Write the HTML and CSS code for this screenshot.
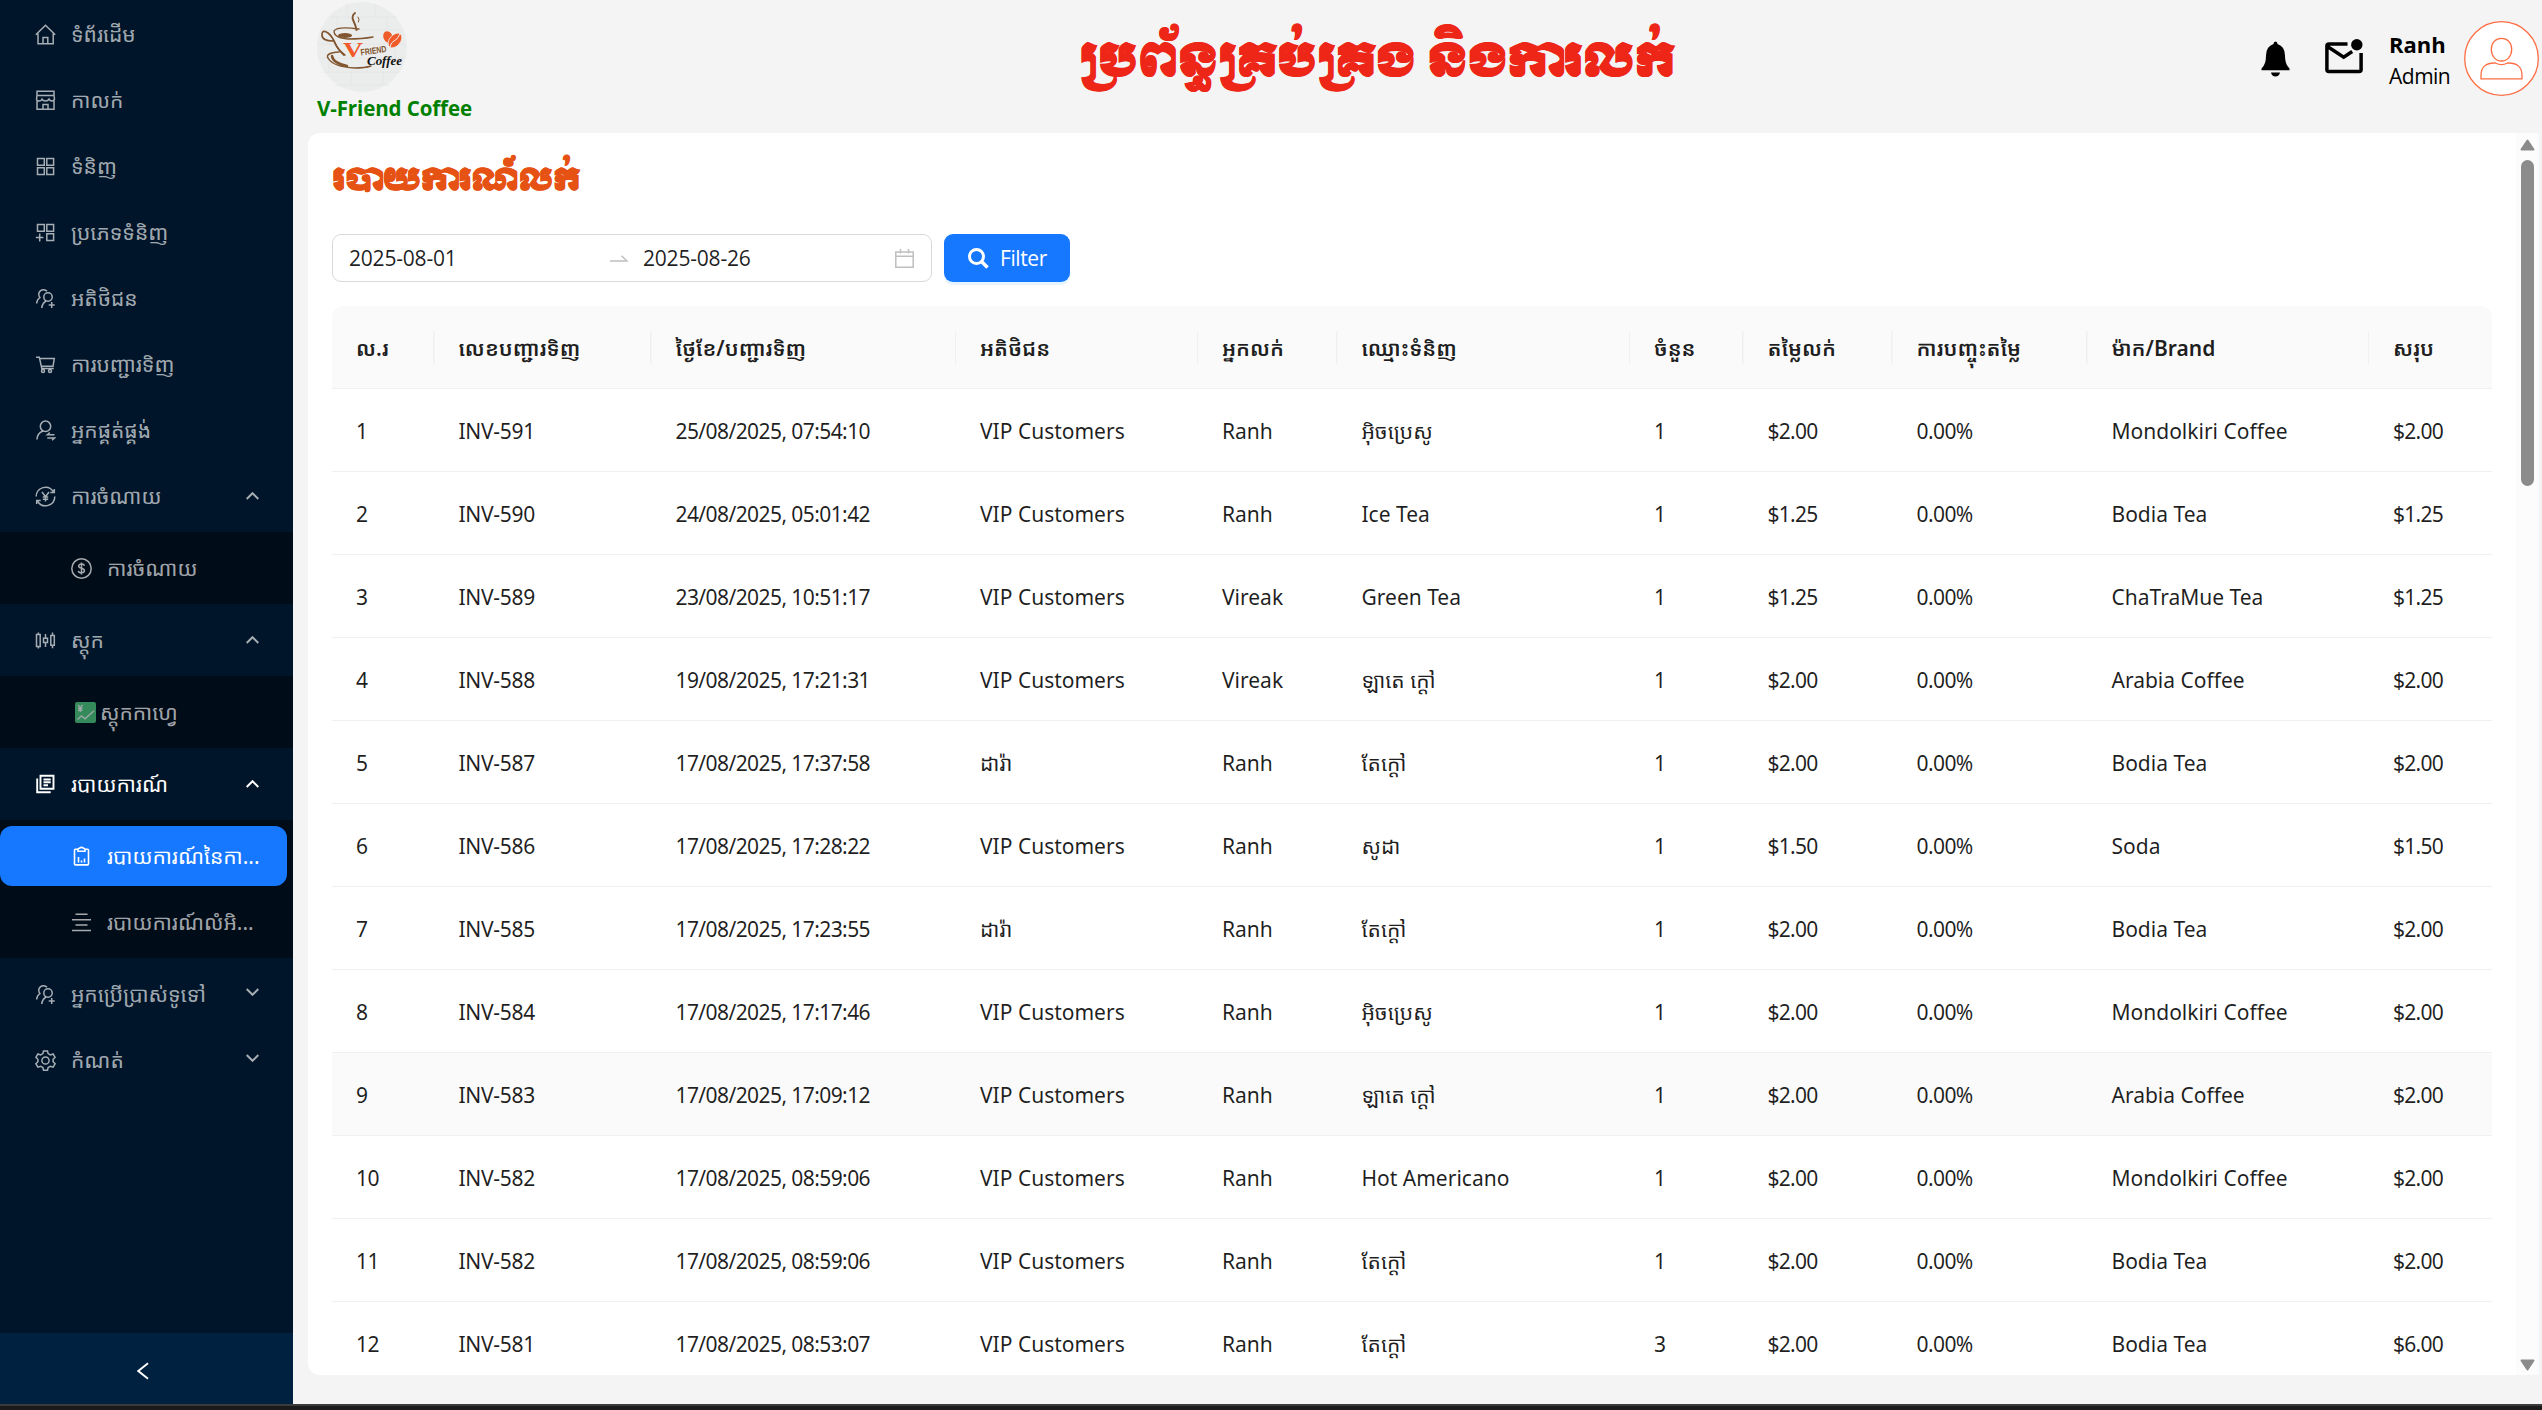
FILE: index.html
```html
<!DOCTYPE html>
<html lang="km">
<head>
<meta charset="utf-8">
<title>V-Friend Coffee</title>
<link rel="stylesheet" href="styles.css">
</head>
<body>
<div class="app">
  <aside class="sidebar">
    <nav class="menu">
      <a class="item"><svg class="icon" viewBox="0 0 21 21"><path d="M.8 10.8 10.5 1.2l9.7 9.6M3 9.5v10.3h15.2V9.5M8 19.8v-6.2h4.8v6.2"/></svg><span>ទំព័រដើម</span></a>
      <a class="item"><svg class="icon" viewBox="0 0 21 21"><path d="M2 1.3h17v4.2H2zM2 5.5 1.5 9q.3 2 2.5 2t3-1.800q.9 1.800 3.500 1.800t3.500-1.800q.9 1.800 3 1.800t2.500-2L19 5.500M2 10.500v8.700h17v-8.700M8 19.200v-4.700h5v4.700"/></svg><span>កាលក់</span></a>
      <a class="item"><svg class="icon" viewBox="0 0 21 21"><path d="M2.500 2.500h6.800v6.800H2.500zM11.800 2.500h6.800v6.800h-6.800zM2.500 11.800h6.800v6.800H2.500zM11.800 11.800h6.800v6.800h-6.800z"/></svg><span>ទំនិញ</span></a>
      <a class="item"><svg class="icon" viewBox="0 0 21 21"><path d="M2.500 2.500h6.800v6.800H2.500zM11.800 2.500h6.800v6.800h-6.800zM11.800 11.800h6.800v6.800h-6.800zM4.700 11.500v8M.9 15.600h7.500"/></svg><span>ប្រភេទទំនិញ</span></a>
      <a class="item"><svg class="icon" viewBox="0 0 21 21"><circle cx="13" cy="9" r="4.200"/><path d="M6.800 20q.3-4.500 4.200-7M12 3.300A4.200 4.200 0 1 0 4.900 9.500Q2 11.500 1.600 15.500M16.700 14v6M13.700 17h6"/></svg><span>អតិថិជន</span></a>
      <a class="item"><svg class="icon" viewBox="0 0 21 21"><path d="M1 3.200h3.300l2.500 11.200h12M5 4.500h14.300L18 12.300H6.300"/><circle cx="8" cy="17" r="1.500"/><circle cx="15" cy="17" r="1.500"/></svg><span>ការបញ្ជារទិញ</span></a>
      <a class="item"><svg class="icon" viewBox="0 0 21 21"><circle cx="10.500" cy="6.300" r="5.200"/><path d="M1.900 19.500q.3-6 6-8.500M19.500 14.800h-7.200l2.500-2.300M12.300 18h7.200L17 20.300"/></svg><span>អ្នកផ្គត់ផ្គង់</span></a>
      <a class="item"><svg class="icon" viewBox="0 0 21 21"><path d="M1.200 10.500A9.300 9.300 0 0 1 18.300 5.500M19.800 10.500A9.300 9.300 0 0 1 2.700 15.500M19.300 3v3.500h-4M1.700 18v-3.500h4M7 6l3.500 4.700L14 6M10.500 10.500v5M7.800 11h5.400M7.800 13.300h5.400"/></svg><span>ការចំណាយ</span><svg class="caret" viewBox="0 0 13 8"><path d="M.7 7 6.500 1.200 12.300 7"/></svg></a>
      <div class="submenu">
        <a class="item"><svg class="icon" viewBox="0 0 21 21"><circle cx="10.500" cy="10.500" r="9.700"/><path d="M13.500 7.700q-.5-1.700-3-1.700t-2.800 2q0 1.700 2.800 2.300t3 2.500q-.2 2-3 2t-3.200-2M10.500 4.500v12"/></svg><span>ការចំណាយ</span></a>
      </div>
      <a class="item"><svg class="icon" viewBox="0 0 21 21"><path d="M1.500 4.500h3.700v12H1.500zM3.400 2.500v2M3.400 16.500v2M10.500 4v4.300M10.500 12.500V17M8.500 8.300h4v4.200h-4zM15.800 5.500h3.500v9.700h-3.500zM17.500 2.500v3M17.500 15.200v3"/></svg><span>ស្តុក</span><svg class="caret" viewBox="0 0 13 8"><path d="M.7 7 6.500 1.200 12.300 7"/></svg></a>
      <div class="submenu">
        <a class="item stock"><svg class="emoji" viewBox="0 0 21 21"><rect width="21" height="21" rx="2" fill="#358a5b"/><path d="M2.500 17.500 6.500 13.800l3.500 3 9-8M3 3l2.300 3L7.500 3M5.300 6v4M3 6.500h4.500M3 8.300h4.500" fill="none" stroke="#9fa9a9" stroke-width="1.300"/></svg><span>ស្តុកកាហ្វេ</span></a>
      </div>
      <a class="item open"><svg class="icon" viewBox="0 0 21 21"><path d="M5.500 1.800h13v13h-13zM2.200 4.500v13.800h13.500M8.500 5.500h7.200M8.500 8.300h7.200M8.500 11.200h4.500" stroke-width="1.900"/></svg><span>របាយការណ៍</span><svg class="caret" viewBox="0 0 13 8"><path d="M.7 7 6.500 1.200 12.300 7"/></svg></a>
      <div class="submenu">
        <a class="item selected"><svg class="icon" viewBox="0 0 21 21"><path d="M7 3.300H4.300q-.8 0-.8.800v14q0 .8.800.8h12.400q.8 0 .8-.8v-14q0-.8-.8-.8H14M7 3.500q0-1.300 1.500-1.300 2-1.700 4 0 1.500 0 1.500 1.300v1.800H7zM7.500 11v5.500M10.500 14.500v2M13.500 12.500v4" stroke-width="1.600"/></svg><span>របាយការណ៍នៃកា...</span></a>
        <a class="item"><svg class="icon" viewBox="0 0 21 21"><path d="M4.500 2.300h12M1 7.700h19M4.500 13.100h12M1 18.500h19"/></svg><span>របាយការណ៍លំអិ...</span></a>
      </div>
      <a class="item"><svg class="icon" viewBox="0 0 21 21"><circle cx="13" cy="9" r="4.200"/><path d="M6.800 20q.3-4.500 4.200-7M12 3.300A4.200 4.200 0 1 0 4.900 9.500Q2 11.500 1.600 15.500M16.700 14v6M13.700 17h6"/></svg><span>អ្នកប្រើប្រាស់ទូទៅ</span><svg class="caret down" viewBox="0 0 13 8"><path d="M.7 1 6.500 6.800 12.300 1"/></svg></a>
      <a class="item"><svg class="icon" viewBox="0 0 21 21"><circle cx="10.500" cy="10.500" r="3.600"/><path d="M8.500.9h4l.6 2.700 2.300 1.300 2.700-.9 2 3.400-2 1.900v2.500l2 1.900-2 3.400-2.700-.9-2.300 1.300-.6 2.700h-4l-.6-2.700-2.300-1.300-2.700.9-2-3.400 2-1.900V9.300l-2-1.900 2-3.400 2.700.9 2.300-1.300z"/></svg><span>កំណត់</span><svg class="caret down" viewBox="0 0 13 8"><path d="M.7 1 6.500 6.800 12.300 1"/></svg></a>
    </nav>
    <div class="trigger"><svg width="12" height="18" viewBox="0 0 12 18"><path d="M11 1.200 1.300 9l9.700 7.800" fill="none" stroke="#fff" stroke-width="1.900"/></svg></div>
  </aside>

  <main class="main">
    <header class="header">
      <div class="brand">
        <svg class="logo" viewBox="0 0 90 90">
          <circle cx="45" cy="45" r="45" fill="#ebecec"/>
          <path d="M12 15h68M4 28h82M1 42h88M1 56h88M6 70h78M18 83h54M30 2v13M58 2v13M70 15v13M20 15v13M12 56v14M50 56v14M66 70v13M34 70v13M78 42v14" stroke="#e3e4e4" stroke-width=".8" fill="none"/>
          <g fill="none" stroke="#80552f" stroke-linecap="round">
            <path d="M38 11q-4 3-1.500 8t3 9" stroke-width="1.900"/><path d="M41 15q2 2 .5 5" stroke-width="1"/>
            <path d="M42 27q-22-3-25 2 0 7 14 8 14 0 25-2" stroke-width="1.400"/>
            <path d="M16 39Q5 39 5 33t6-2q4 3 7 10t9 12" stroke-width="1.700"/>
            <path d="M17 39q3 8 11 14M22 50q-14 1-11 6 5 9 27 10 10 0 16-2" stroke-width="1.500"/>
            <path d="M15 54q1 7 15 10" stroke-width="2.500"/>
          </g>
          <ellipse cx="28" cy="33.500" rx="7" ry="2.500" fill="#80552f"/>
          <text x="26" y="55" textLength="20" lengthAdjust="spacingAndGlyphs" class="logo-v">V</text>
          <text x="44" y="53.500" textLength="26" lengthAdjust="spacingAndGlyphs" class="logo-name" transform="rotate(-8 44 53.500)">FRIEND</text>
          <text x="50" y="62.500" textLength="35" lengthAdjust="spacingAndGlyphs" class="logo-coffee">Coffee</text>
          <ellipse cx="71" cy="35" rx="4.500" ry="6" fill="#f15a29" transform="rotate(-25 71 35)"/>
          <ellipse cx="78" cy="38.500" rx="5.500" ry="8.500" fill="#f15a29" stroke="#ebecec" stroke-width=".8" transform="rotate(40 78 38.500)"/>
          <path d="M83 32q-3 6-6 7t-4 6" fill="none" stroke="#ebecec"/>
        </svg>
        <strong>V-Friend Coffee</strong>
      </div>
      <h1 class="title">ប្រព័ន្ធគ្រប់គ្រង និងការលក់</h1>
      <div class="user">
        <svg class="bell" viewBox="0 0 29 36"><path d="M14.500.5q2 0 2 2.500 7.500 2.500 7.500 11.500 0 9 4.500 13v1.800H.5v-1.800q4.500-4 4.500-13Q5 5.500 12.500 3q0-2.500 2-2.500zM10 31.500h9q-.8 4-4.500 4t-4.500-4z"/></svg>
        <svg class="mail" viewBox="0 0 38 35"><path d="M22.500 5H4Q1.900 5 1.900 7v23.500q0 2 2.100 2h30q2.100 0 2.100-2V14M2.500 7.500l16.200 10.600 8.500-5.600" fill="none" stroke="#000" stroke-width="3.500"/><circle cx="31.800" cy="5.700" r="5.700"/></svg>
        <div class="who"><b>Ranh</b><span>Admin</span></div>
        <svg class="avatar" viewBox="0 0 75 75"><circle cx="37.500" cy="37.500" r="36.800" fill="#fff"/><path d="M37.500 17.300c6 0 10.200 4.500 10.200 11s-4.200 11.700-10.200 11.700-10.200-5.200-10.200-11.700 4.200-11 10.200-11zM31.500 42q6 3.200 12 0 14.500-.5 14.500 12.500v3.300H17v-3.300Q17 41.500 31.500 42z" fill="none"/></svg>
      </div>
    </header>

    <section class="card">
      <div class="content">
        <h2 class="subtitle">របាយការណ៍លក់</h2>
        <div class="filters">
          <div class="range">
            <span class="date">2025-08-01</span>
            <svg width="18" height="7" viewBox="0 0 18 7"><path d="M0 6h17L11.500.8" fill="none" stroke="#bfbfbf" stroke-width="1.500"/></svg>
            <span class="date second">2025-08-26</span>
            <svg width="19" height="19" viewBox="0 0 19 19"><path d="M.8 3h17.400v15.200H.8zM.8 7.300h17.400M5.500 0v4.500M13.500 0v4.500" fill="none" stroke="#bfbfbf" stroke-width="1.500"/></svg>
          </div>
          <button class="filter"><svg width="21" height="21" viewBox="0 0 21 21"><circle cx="8.500" cy="8.500" r="7" fill="none" stroke="#fff" stroke-width="3"/><path d="m13.500 13.500 6 6" stroke="#fff" stroke-width="3.500"/></svg><span>Filter</span></button>
        </div>
        <table class="table">
          <colgroup><col style="width:102.500px"><col style="width:217px"><col style="width:304.500px"><col style="width:242px"><col style="width:139.500px"><col style="width:292.500px"><col style="width:113.500px"><col style="width:149px"><col style="width:195px"><col style="width:281.500px"><col style="width:123px"></colgroup>
          <thead><tr><th>ល.រ</th><th>លេខបញ្ជារទិញ</th><th>ថ្ងៃខែ/បញ្ជារទិញ</th><th>អតិថិជន</th><th>អ្នកលក់</th><th>ឈ្មោះទំនិញ</th><th>ចំនួន</th><th>តម្លៃលក់</th><th>ការបញ្ចុះតម្លៃ</th><th>ម៉ាក/Brand</th><th>សរុប</th></tr></thead>
          <tbody>
            <tr><td>1</td><td>INV-591</td><td>25/08/2025, 07:54:10</td><td>VIP Customers</td><td>Ranh</td><td>អ៊ិចប្រេសូ</td><td>1</td><td>$2.00</td><td>0.00%</td><td>Mondolkiri Coffee</td><td>$2.00</td></tr>
            <tr><td>2</td><td>INV-590</td><td>24/08/2025, 05:01:42</td><td>VIP Customers</td><td>Ranh</td><td>Ice Tea</td><td>1</td><td>$1.25</td><td>0.00%</td><td>Bodia Tea</td><td>$1.25</td></tr>
            <tr><td>3</td><td>INV-589</td><td>23/08/2025, 10:51:17</td><td>VIP Customers</td><td>Vireak</td><td>Green Tea</td><td>1</td><td>$1.25</td><td>0.00%</td><td>ChaTraMue Tea</td><td>$1.25</td></tr>
            <tr><td>4</td><td>INV-588</td><td>19/08/2025, 17:21:31</td><td>VIP Customers</td><td>Vireak</td><td>ឡាតេ ក្តៅ</td><td>1</td><td>$2.00</td><td>0.00%</td><td>Arabia Coffee</td><td>$2.00</td></tr>
            <tr><td>5</td><td>INV-587</td><td>17/08/2025, 17:37:58</td><td>ដារ៉ា</td><td>Ranh</td><td>តែក្តៅ</td><td>1</td><td>$2.00</td><td>0.00%</td><td>Bodia Tea</td><td>$2.00</td></tr>
            <tr><td>6</td><td>INV-586</td><td>17/08/2025, 17:28:22</td><td>VIP Customers</td><td>Ranh</td><td>សូដា</td><td>1</td><td>$1.50</td><td>0.00%</td><td>Soda</td><td>$1.50</td></tr>
            <tr><td>7</td><td>INV-585</td><td>17/08/2025, 17:23:55</td><td>ដារ៉ា</td><td>Ranh</td><td>តែក្តៅ</td><td>1</td><td>$2.00</td><td>0.00%</td><td>Bodia Tea</td><td>$2.00</td></tr>
            <tr><td>8</td><td>INV-584</td><td>17/08/2025, 17:17:46</td><td>VIP Customers</td><td>Ranh</td><td>អ៊ិចប្រេសូ</td><td>1</td><td>$2.00</td><td>0.00%</td><td>Mondolkiri Coffee</td><td>$2.00</td></tr>
            <tr class="hovered"><td>9</td><td>INV-583</td><td>17/08/2025, 17:09:12</td><td>VIP Customers</td><td>Ranh</td><td>ឡាតេ ក្តៅ</td><td>1</td><td>$2.00</td><td>0.00%</td><td>Arabia Coffee</td><td>$2.00</td></tr>
            <tr><td>10</td><td>INV-582</td><td>17/08/2025, 08:59:06</td><td>VIP Customers</td><td>Ranh</td><td>Hot Americano</td><td>1</td><td>$2.00</td><td>0.00%</td><td>Mondolkiri Coffee</td><td>$2.00</td></tr>
            <tr><td>11</td><td>INV-582</td><td>17/08/2025, 08:59:06</td><td>VIP Customers</td><td>Ranh</td><td>តែក្តៅ</td><td>1</td><td>$2.00</td><td>0.00%</td><td>Bodia Tea</td><td>$2.00</td></tr>
            <tr><td>12</td><td>INV-581</td><td>17/08/2025, 08:53:07</td><td>VIP Customers</td><td>Ranh</td><td>តែក្តៅ</td><td>3</td><td>$2.00</td><td>0.00%</td><td>Bodia Tea</td><td>$6.00</td></tr>
          </tbody>
        </table>
      </div>
      <div class="scrollbar">
        <svg width="15" height="12" viewBox="0 0 15 12"><path d="M7.500 1.500 13.500 10.500H1.500z" fill="#8b8b8b" stroke="#8b8b8b" stroke-width="2" stroke-linejoin="round"/></svg>
        <div class="thumb"></div>
        <svg class="arrow-down" width="15" height="12" viewBox="0 0 15 12"><path d="M7.500 10.500 13.500 1.500H1.500z" fill="#8b8b8b" stroke="#8b8b8b" stroke-width="2" stroke-linejoin="round"/></svg>
      </div>
    </section>
  </main>
</div>
<footer class="taskbar"></footer>
</body>
</html>
```
FILE: styles.css
```css
* { box-sizing: border-box; }
body {
  margin: 0;
  height: 1410px;
  overflow: hidden;
  background: #f4f4f4;
  color: rgba(0, 0, 0, .88);
  font-family: "Noto Sans", "Noto Sans Khmer", "Khmer OS", sans-serif;
  font-size: 21px;
}
.app { display: flex; height: 1404px; }
.taskbar { height: 6px; background: #1a1a1a; border-top: 2px solid #3a3a3a; }

/* Sidebar */
.sidebar {
  width: 293px;
  flex: none;
  display: flex;
  flex-direction: column;
  background: #001529;
  color: rgba(255, 255, 255, .65);
}
.menu { flex: 1; padding-top: 4px; display: flex; flex-direction: column; gap: 6px; }
.item {
  display: flex;
  align-items: center;
  height: 60px;
  padding: 0 34px 0 35px;
  white-space: nowrap;
}
.item span { margin-left: 15px; flex: 1; }
.icon { width: 21px; height: 21px; flex: none; fill: none; stroke: currentColor; stroke-width: 1.5; }
.caret { width: 13px; height: 8px; flex: none; fill: none; stroke: currentColor; stroke-width: 2; }
.caret.down { margin-top: -5px; }
.submenu { display: flex; flex-direction: column; gap: 6px; padding: 6px 0; background: #000c17; }
.submenu .item { padding: 0 6px 0 71px; }
.submenu .stock { padding-left: 75px; }
.emoji { width: 21px; height: 21px; flex: none; }
.item.stock span { margin-left: 4px; }
.open { color: #fff; }
.submenu .selected { width: 287px; border-radius: 12px; background: #1677ff; color: #fff; }
.trigger { height: 71px; padding: 4px 7px 0 0; display: flex; align-items: center; justify-content: center; background: #002140; }

/* Header */
.main { flex: 1; min-width: 0; display: flex; flex-direction: column; }
.header { height: 133px; display: flex; padding: 0 3px 0 24px; color: #000; font-family: "Open Sans", sans-serif; }
.brand { width: 710px; padding-top: 2px; display: flex; flex-direction: column; }
.brand strong { font-size: 20.5px; line-height: 28px; margin-top: 2px; color: #008000; letter-spacing: -.1px; }
.logo { width: 90px; height: 90px; }
.logo-v { font: bold 22px "Liberation Serif", serif; fill: #f15a29; }
.logo-name { font: bold 9px "Liberation Sans", sans-serif; fill: #80552f; }
.logo-coffee { font: italic bold 12px "Liberation Serif", serif; fill: #111; }
.title {
  margin: 0;
  width: 700px;
  text-align: center;
  white-space: nowrap;
  line-height: 123px;
  font-family: "Moul", "Khmer OS Muol Light", "Noto Serif Khmer", "Noto Sans", "Noto Sans Khmer", sans-serif;
  font-size: 45.5px;
  font-weight: 900;
  color: #ed2618;
  -webkit-text-stroke: .8px #ed2618;
}
.user { display: flex; align-items: flex-start; margin-left: auto; }
.bell { width: 29px; height: 36px; margin: 41px 35px 0 0; }
.mail { width: 38px; height: 35px; margin: 39px 26px 0 0; }
.who { width: 75px; display: flex; flex-direction: column; padding-top: 28px; font-size: 21px; line-height: 32px; }
.who b { font-size: 22px; }
.who span { letter-spacing: -.5px; }
.avatar { width: 75px; height: 75px; margin-top: 21px; stroke: #ff6d43; stroke-width: 1.3; }

/* Card */
.card { height: 1242px; margin: 0 3px 0 15px; display: flex; background: #fff; border-radius: 12px 0 0 12px; overflow: hidden; }
.content { flex: 1; min-width: 0; padding: 0 24px; overflow: hidden; }
.subtitle {
  margin: 0 0 5px;
  height: 96px;
  line-height: 96px;
  font-family: "Moul", "Khmer OS Muol Light", "Noto Serif Khmer", "Noto Sans", "Noto Sans Khmer", sans-serif;
  font-size: 30.4px;
  font-weight: 900;
  color: #e65213;
  -webkit-text-stroke: .6px #e65213;
}
.filters { display: flex; gap: 12px; margin-bottom: 24px; font-family: "Open Sans", sans-serif; font-size: 21px; }
.range { width: 600px; height: 48px; display: flex; align-items: center; padding: 0 17px 0 16px; border: 1.5px solid #d9d9d9; border-radius: 9px; letter-spacing: -.2px; }
.date { width: 261px; }
.date.second { width: 252px; margin-left: 15px; }
.filter { width: 126px; height: 48px; padding: 0 0 0 24px; display: flex; align-items: center; gap: 11px; border: 0; border-radius: 9px; background: #1677ff; color: #fff; font: inherit; letter-spacing: -.4px; box-shadow: 0 3px 0 rgba(5, 145, 255, .1); }
.table { width: 2160px; table-layout: fixed; border-collapse: separate; border-spacing: 0; line-height: 30px; }
.table th, .table td { height: 83px; padding: 1px 24px 0; text-align: left; white-space: nowrap; border-bottom: 1px solid #f0f0f0; }
.table th {
  background: linear-gradient(#f0f0f0, #f0f0f0) right center / 1.5px 33px no-repeat #fafafa;
  font-weight: 600;
}
.table th:first-child { border-top-left-radius: 12px; }
.table th:last-child { background: #fafafa; border-top-right-radius: 12px; }
.hovered td { background: #fafafa; }
/* Numeric columns are set slightly tighter */
.table td:nth-child(2) { letter-spacing: -.3px; }
.table td:nth-child(1), .table td:nth-child(3), .table td:nth-child(9) { letter-spacing: -.58px; }
.table td:nth-child(8), .table td:nth-child(11) { letter-spacing: -.75px; }

.scrollbar { width: 23px; padding: 6px 0 4px; display: flex; flex-direction: column; align-items: center; background: #fcfcfc; }
.thumb { width: 13px; height: 326px; margin-top: 9px; border-radius: 7px; background: #8b8b8b; }
.arrow-down { margin-top: auto; }
```
